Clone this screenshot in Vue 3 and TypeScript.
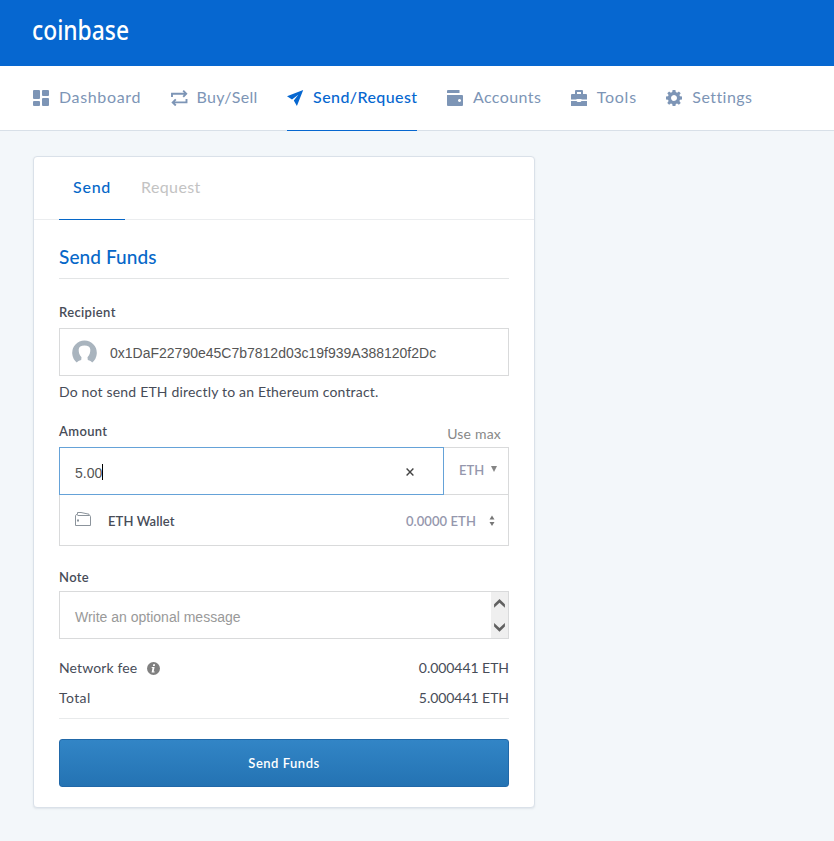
<script setup lang="ts">
import { ref } from 'vue'

interface NavItem {
  id: string
  label: string
  active?: boolean
}

const navItems: NavItem[] = [
  { id: 'dashboard', label: 'Dashboard' },
  { id: 'trade', label: 'Buy/Sell' },
  { id: 'send', label: 'Send/Request', active: true },
  { id: 'accounts', label: 'Accounts' },
  { id: 'tools', label: 'Tools' },
  { id: 'settings', label: 'Settings' },
]

const recipient = ref('0x1DaF22790e45C7b7812d03c19f939A388120f2Dc')
const amount = ref('5.00')
const fee = '0.000441 ETH'
const total = '5.000441 ETH'
</script>

<template>
  <div class="page">
    <header class="topbar">
      <svg class="logo" width="110" height="50" viewBox="0 0 110 50">
        <text x="4" y="32" textLength="97" lengthAdjust="spacingAndGlyphs">coinbase</text>
      </svg>
    </header>

    <nav class="nav">
      <a v-for="item in navItems" :key="item.id" :class="['nav-item', item.id, { active: item.active }]">
        <svg class="nav-icon" width="18" height="16" viewBox="0 0 18 16" fill="currentColor">
          <template v-if="item.id === 'dashboard'">
            <rect x="0" y="0" width="7" height="9" rx="1" />
            <rect x="9" y="0" width="7" height="6" rx="1" />
            <rect x="0" y="11" width="7" height="5" rx="1" />
            <rect x="9" y="8" width="7" height="8" rx="1" />
          </template>
          <g v-else-if="item.id === 'trade'" fill="none" stroke="currentColor" stroke-width="1.9">
            <path d="M1 7V3.7H15.5M12.2 .7L15.2 3.7L12.2 6.8" />
            <path d="M15.5 9V12.4H1.5M4.8 9.3L1.7 12.4L4.8 15.5" />
          </g>
          <path v-else-if="item.id === 'send'" d="M16.2 0L0 6.2L5 9.4L11.3 4.8L6.8 10.6L9.9 16Z" />
          <template v-else-if="item.id === 'accounts'">
            <path d="M1 0H12.5V3H0V1Q0 0 1 0Z" />
            <path fill-rule="evenodd" d="M0 5H15Q16 5 16 6V15Q16 16 15 16H1Q0 16 0 15ZM12.5 9a1.5 1.5 0 1 0 .01 0Z" />
          </template>
          <template v-else-if="item.id === 'tools'">
            <path fill-rule="evenodd" d="M4 4V1Q4 0 5 0H11Q12 0 12 1V4H15Q16 4 16 5V9.5H10.5V9H5.5V9.5H0V5Q0 4 1 4ZM6 2V4H10V2Z" />
            <path d="M0 11H5.5L6.5 12H9.5L10.5 11H16V16H0Z" />
          </template>
          <template v-else>
            <path
              fill-rule="evenodd"
              d="M6.6 0H9.4L9.8 2.1L11.1 2.7L12.9 1.4L14.7 3.2L13.4 5L14 6.3L16 6.6V9.4L14 9.8L13.4 11.1L14.7 12.9L12.9 14.7L11.1 13.4L9.8 14L9.4 16H6.6L6.2 14L4.9 13.4L3.1 14.7L1.3 12.9L2.6 11.1L2 9.8L0 9.4V6.6L2 6.3L2.6 5L1.3 3.2L3.1 1.4L4.9 2.7L6.2 2.1ZM8 5A3 3 0 1 0 8.01 5Z"
            />
          </template>
        </svg>
        <span>{{ item.label }}</span>
      </a>
    </nav>

    <main class="card">
      <div class="tabs">
        <a class="tab selected">Send</a>
        <a class="tab request">Request</a>
      </div>

      <div class="body">
        <h2 class="title">Send Funds</h2>

        <label class="label recipient-label">Recipient</label>
        <div class="field recipient">
          <svg width="26" height="24" viewBox="0 0 26 24">
            <path
              fill="#a9b4be"
              d="M4.8 22.4A12.3 12.3 0 1 1 20.2 22.4C19.3 21.3 18 20.6 15.8 20L15.5 17.3C17.8 15 18.4 12 18.3 9.6C18.2 7 16 5.6 12.5 5.6S6.8 7 6.7 9.6C6.6 12 7.2 15 9.5 17.3L9.2 20C7 20.6 5.7 21.3 4.8 22.4Z"
            />
          </svg>
          <span class="address">{{ recipient }}</span>
        </div>
        <p class="help">Do not send ETH directly to an Ethereum contract.</p>

        <div class="amount-head">
          <label class="label amount-label">Amount</label>
          <a class="use-max">Use max</a>
        </div>
        <div class="amount-row">
          <div class="amount-input">
            <span class="amount-value">{{ amount }}</span>
            <i class="caret"></i>
            <svg class="clear" width="8" height="8" viewBox="0 0 8 8">
              <path d="M.6 .6L7.4 7.4M7.4 .6L.6 7.4" stroke="#444" stroke-width="1.4" />
            </svg>
          </div>
          <div class="currency">
            <span>ETH</span>
            <svg width="6" height="6" viewBox="0 0 6 6"><path d="M0 0H6L3 6Z" fill="#858585" /></svg>
          </div>
        </div>
        <div class="wallet">
          <svg width="17" height="15" viewBox="0 0 17 15" fill="none" stroke="#8c949c">
            <path d="M2.5 3.5H14.5Q15.5 3.5 15.5 4.5V13.5H.5V3.5Q.5 2.5 2.5 2.5V.5H6L14 2.2V3.5" />
            <rect x="2.5" y="8" width="1" height="1" />
          </svg>
          <span class="wallet-name">ETH Wallet</span>
          <span class="balance">0.0000 ETH</span>
          <svg width="6" height="12" viewBox="0 0 6 12" fill="#777">
            <path d="M3 .5L5.5 4.5H.5ZM3 11L.5 7H5.5Z" />
          </svg>
        </div>

        <label class="label note-label">Note</label>
        <div class="field note">
          <span>Write an optional message</span>
          <div class="scroll">
            <svg width="11" height="9" viewBox="0 0 11 9"><path d="M.1 5.3L5.5 0L10.9 5.3V8.7L5.5 3.8L.1 8.7Z" /></svg>
            <svg width="11" height="9" viewBox="0 0 11 9"><path d="M.1 3.5V.1L5.5 5L10.9 .1V3.5L5.5 8.8Z" /></svg>
          </div>
        </div>

        <div class="summary">
          <div class="row">
            <span class="fee-label">Network fee</span>
            <svg width="13" height="13" viewBox="0 0 13 13">
              <circle cx="6.5" cy="6.5" r="6.5" fill="#808080" />
              <path d="M6.2 2.2H8.1L7.8 4H5.9ZM4.8 5H7.6L6.7 9.4H7.7L7.5 10.6H4.6L5.5 6.1H4.6Z" fill="#fff" />
            </svg>
            <span class="value">{{ fee }}</span>
          </div>
          <div class="row">
            <span class="total-label">Total</span>
            <span class="value">{{ total }}</span>
          </div>
        </div>

        <button class="submit">Send Funds</button>
      </div>
    </main>
  </div>
</template>

<style>
body {
  background: #f3f7fa;
}
</style>

<style scoped>
* {
  box-sizing: border-box;
}
svg {
  display: block;
  flex: none;
}
.page {
  min-height: 841px;
  background: #f3f7fa;
  font-family: Lato, 'Liberation Sans', sans-serif;
  color: #474c58;
}
.topbar {
  height: 66px;
  padding: 8px 0 0 28px;
  background: #0667d0;
}
.logo text {
  font-family: 'Noto Sans', sans-serif;
  font-size: 27px;
  font-weight: 500;
  fill: #fff;
}
.nav {
  display: flex;
  gap: 29.5px;
  height: 65px;
  padding-left: 33px;
  background: #fff;
  border-bottom: 1px solid #d8e0e8;
}
.nav-item {
  display: flex;
  gap: 8px;
  height: 65px;
  font-size: 16px;
  line-height: 62px;
  letter-spacing: 0.4px;
  color: #7d95b6;
  white-space: nowrap;
}
.nav-icon {
  margin-top: 24px;
}
.nav-item.dashboard {
  letter-spacing: 0.65px;
}
.nav-item.trade {
  letter-spacing: 0.3px;
}
.nav-item.tools {
  letter-spacing: 0.75px;
}
.nav-item.settings {
  letter-spacing: 0.45px;
}
.nav-item.active {
  color: #0667d0;
  border-bottom: 1px solid #0667d0;
  font-weight: 500;
}
.card {
  width: 502px;
  height: 652px;
  margin: 25px 0 0 33px;
  background: #fff;
  border: 1px solid #dae1e9;
  border-radius: 4px;
  box-shadow: 0 1px 2px rgba(60, 80, 100, 0.1);
}
.tabs {
  display: flex;
  height: 63px;
  padding-left: 25px;
  border-bottom: 1px solid #ebedef;
}
.tab {
  height: 63px;
  line-height: 60px;
  font-size: 16px;
  letter-spacing: 0.4px;
  color: #c3c3c3;
}
.tab.selected {
  width: 66px;
  padding-left: 14px;
  margin-right: 16px;
  letter-spacing: 0.75px;
  color: #0667c8;
  border-bottom: 1px solid #0667c8;
  font-weight: 500;
}
.body {
  display: flex;
  flex-direction: column;
  padding: 0 25px;
}
.title {
  height: 59px;
  margin: 0;
  padding-top: 24px;
  font-size: 19px;
  font-weight: 500;
  line-height: 25px;
  letter-spacing: 0.1px;
  color: #0667c8;
  border-bottom: 1px solid #e3e5e6;
}
.label {
  font-size: 13px;
  line-height: 16px;
  font-weight: 600;
  letter-spacing: 0.35px;
}
.recipient-label {
  margin-top: 25px;
}
.field {
  display: flex;
  height: 48px;
  border: 1px solid #d9dadb;
  font-family: 'Liberation Sans', Arial, sans-serif;
  font-size: 14px;
}
.recipient {
  align-items: center;
  gap: 12px;
  margin-top: 8px;
  padding-left: 12px;
  color: #555;
}
.address {
  padding-top: 2px;
}
.help {
  margin: 6px 0 0;
  font-size: 14px;
  line-height: 20px;
  letter-spacing: 0.18px;
  white-space: nowrap;
}
.amount-head {
  display: flex;
  justify-content: space-between;
  height: 24px;
  margin-top: 21px;
  padding-right: 8px;
}
.use-max {
  padding-top: 2px;
  font-size: 14px;
  line-height: 18px;
  letter-spacing: 0.2px;
  color: #888;
}
.amount-row {
  display: flex;
  height: 48px;
}
.amount-input {
  display: flex;
  align-items: center;
  width: 385px;
  padding: 2px 29px 0 15px;
  border: 1px solid #65a2d8;
  font: 14px 'Liberation Sans', Arial, sans-serif;
  color: #555;
}
.amount-value {
  padding-top: 2px;
}
.caret {
  width: 1px;
  height: 16px;
  background: #000;
}
.clear {
  margin-left: auto;
}
.currency {
  display: flex;
  gap: 7px;
  width: 65px;
  padding-left: 15px;
  border: 1px solid #d9dadb;
  border-left: 0;
  font-size: 13px;
  font-weight: 600;
  line-height: 45px;
  color: #9597ad;
}
.currency svg {
  margin-top: 18px;
}
.wallet {
  display: flex;
  align-items: center;
  height: 51px;
  padding: 1px 13px 0 15px;
  border: 1px solid #d9dadb;
  border-top: 0;
  font-size: 13px;
  font-weight: 600;
}
.wallet > svg:first-child {
  margin-top: -2px;
}
.wallet > svg:last-child {
  margin-top: 0;
}
.wallet-name {
  margin-left: 16px;
  letter-spacing: 0.1px;
}
.balance {
  margin-left: auto;
  margin-right: 13px;
  letter-spacing: 0.08px;
  color: #9597ad;
}
.note-label {
  margin-top: 23px;
}
.note {
  justify-content: space-between;
  margin-top: 6px;
  padding-left: 15px;
  line-height: 50px;
  color: #999;
}
.scroll {
  display: flex;
  flex-direction: column;
  align-items: center;
  justify-content: space-between;
  width: 17px;
  padding: 7px 0 6px;
  background: #efefef;
  fill: #606060;
}
.summary {
  height: 80px;
  padding-top: 14px;
  border-bottom: 1px solid #e8eaeb;
  font-size: 14px;
  letter-spacing: 0.12px;
}
.row {
  display: flex;
  align-items: center;
  gap: 10px;
  height: 30px;
}
.row span {
  padding-bottom: 2px;
}
.total-label {
  letter-spacing: 0.4px;
}
.value {
  margin-left: auto;
  letter-spacing: -0.05px;
}
.submit {
  height: 48px;
  margin-top: 20px;
  padding: 0 0 1px;
  border: 1px solid #2168a8;
  border-radius: 3px;
  background: linear-gradient(#3285c6, #2473b3);
  font: 600 13px Lato, sans-serif;
  letter-spacing: 0.5px;
  color: #fff;
}
</style>
